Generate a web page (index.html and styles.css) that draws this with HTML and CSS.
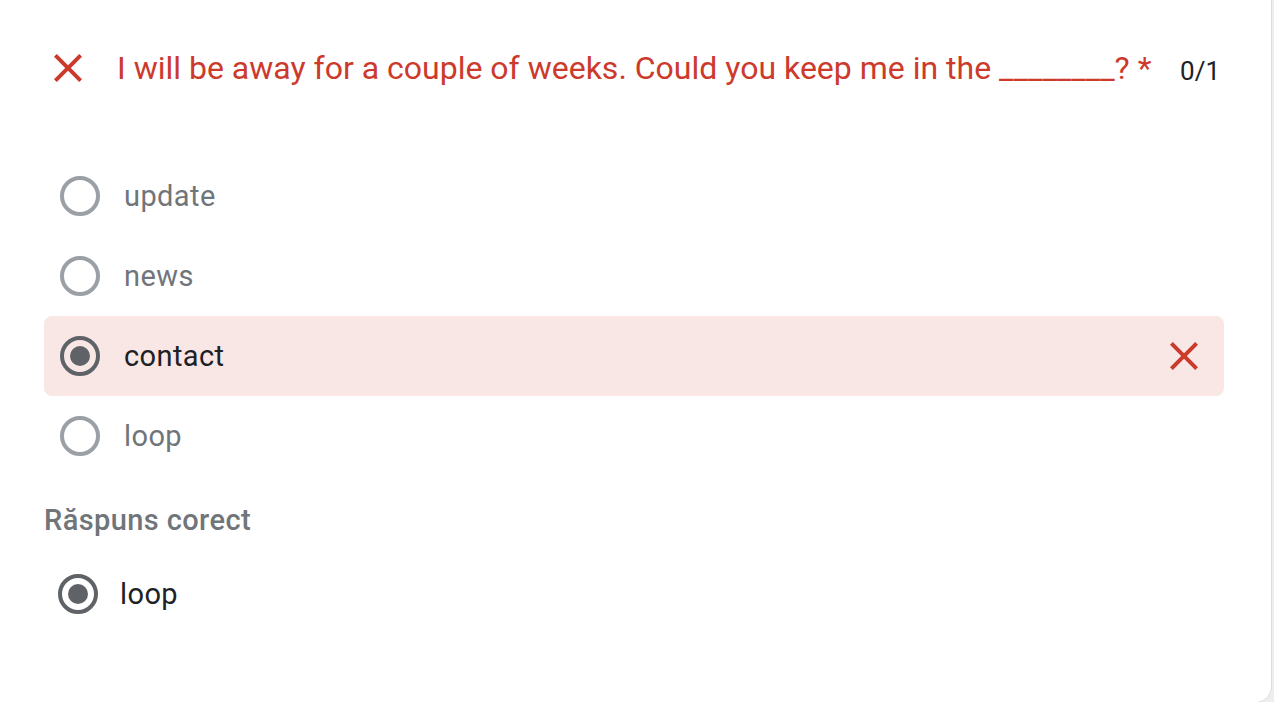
FILE: index.html
```html
<!DOCTYPE html>
<html lang="ro">
<head>
<meta charset="utf-8">
<title>Quiz</title>
<link rel="stylesheet" href="styles.css">
</head>
<body>
<div class="page">
  <div class="card">
    <div class="header">
      <svg class="icon-x" viewBox="0 0 24 24" width="48" height="48"><path d="M19 6.41 17.59 5 12 10.59 6.41 5 5 6.41 10.59 12 5 17.59 6.41 19 12 13.41 17.59 19 19 17.59 13.41 12z"/></svg>
      <div class="question">I will be away for a couple of weeks. Could you keep me in the ________? *</div>
      <div class="score">0/1</div>
    </div>
    <div class="options">
      <div class="option"><span class="radio"></span><span class="label">update</span></div>
      <div class="option"><span class="radio"></span><span class="label">news</span></div>
      <div class="option wrong"><span class="radio checked"></span><span class="label">contact</span>
        <svg class="icon-x" viewBox="0 0 24 24" width="48" height="48"><path d="M19 6.41 17.59 5 12 10.59 6.41 5 5 6.41 10.59 12 5 17.59 6.41 19 12 13.41 17.59 19 19 17.59 13.41 12z"/></svg>
      </div>
      <div class="option"><span class="radio"></span><span class="label">loop</span></div>
    </div>
    <div class="correct-title">Răspuns corect</div>
    <div class="option correct"><span class="radio checked"></span><span class="label">loop</span></div>
  </div>
</div>
</body>
</html>
```
FILE: styles.css
```css
html, body {
  margin: 0;
  padding: 0;
}
body {
  background: #eeeeee;
  font-family: Roboto, "Liberation Sans", Arial, sans-serif;
  width: 1274px;
  height: 702px;
  overflow: hidden;
}
.page {
  padding: 0 2px 0 0;
}
.card {
  margin: -20px 0 0 -2px;
  background: #ffffff;
  border: 1px solid #dadce0;
  border-radius: 0 0 16px 0;
  height: 723px;
  box-sizing: border-box;
  padding: 63px 47px 0 45px;
}
.header {
  display: flex;
  align-items: flex-start;
  padding-right: 4px;
}
.icon-x {
  fill: #cc3a2c;
  flex: none;
}
.question {
  margin-left: 25px;
  color: #cc3a2c;
  font-size: 32px;
  line-height: 48px;
  white-space: nowrap;
}
.score {
  margin-left: auto;
  font-size: 26px;
  line-height: 48px;
  padding-top: 3px;
  color: #202124;
}
.options {
  margin-top: 61px;
}
.option {
  display: flex;
  align-items: center;
  height: 80px;
  padding: 0 16px;
  border-radius: 8px;
}
.option.wrong {
  background: #f9e7e6;
}
.option.wrong .icon-x {
  margin-left: auto;
}
.radio {
  width: 40px;
  height: 40px;
  box-sizing: border-box;
  border: 4px solid #9aa0a6;
  border-radius: 50%;
  flex: none;
  display: flex;
  align-items: center;
  justify-content: center;
}
.radio.checked {
  border-color: #5f6368;
}
.radio.checked::after {
  content: "";
  width: 20px;
  height: 20px;
  border-radius: 50%;
  background: #5f6368;
}
.label {
  margin-left: 24px;
  font-size: 29px;
  color: #70757a;
  letter-spacing: 0.4px;
}
.option.wrong .label,
.option.correct .label {
  color: #202124;
}
.correct-title {
  margin-top: 24px;
  font-size: 29px;
  line-height: 40px;
  font-weight: 500;
  color: #70757a;
  letter-spacing: 0.4px;
}
.option.correct {
  margin-top: 14px;
  padding-left: 14px;
}
.option.correct .label {
  margin-left: 22px;
}
```
